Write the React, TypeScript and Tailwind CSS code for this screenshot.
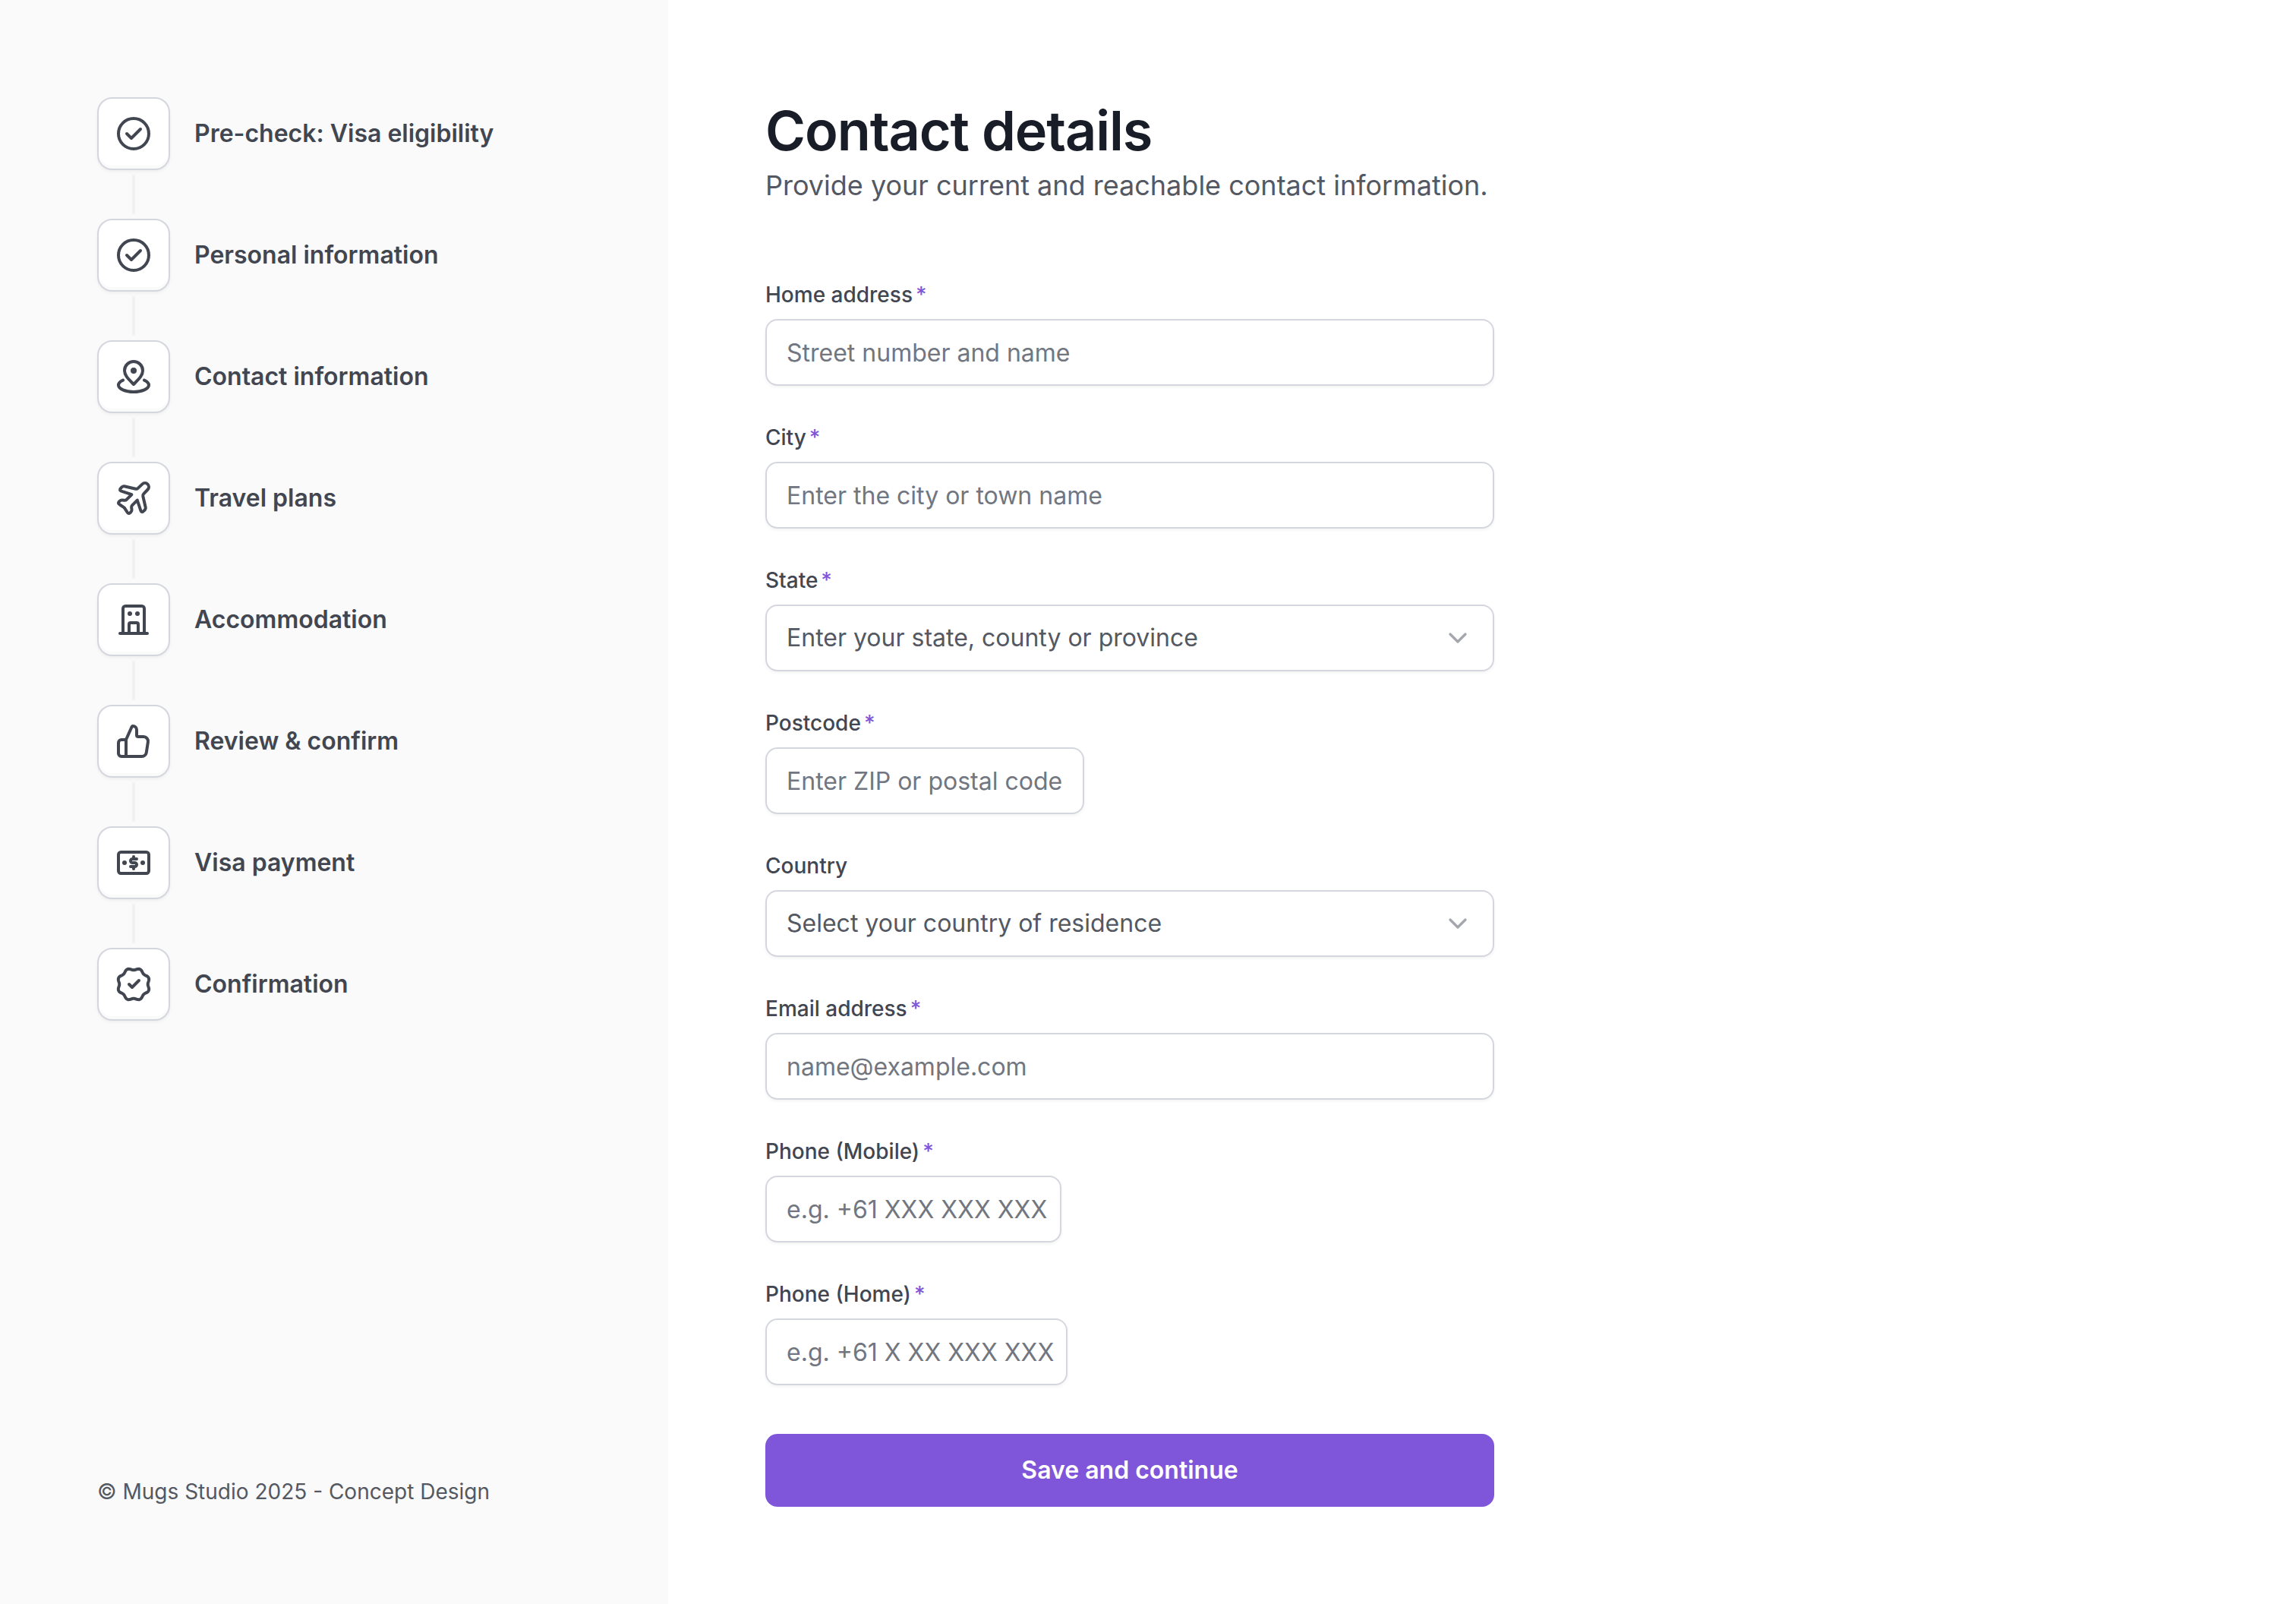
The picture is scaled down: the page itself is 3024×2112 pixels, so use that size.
import React from "react";

// eight-lobed outline of the confirmation badge
const badgePath =
  "M" +
  Array.from({ length: 96 }, (_, i) => {
    const a = (i / 96) * Math.PI * 2;
    const r = 10.05 - 0.7 * Math.cos(8 * a);
    return `${(12 + r * Math.cos(a)).toFixed(2)} ${(12 + r * Math.sin(a)).toFixed(2)}`;
  }).join("L") +
  "Z";

const checkCircle = (
  <>
    <circle cx="12" cy="12" r="10" />
    <path d="M7.5 12l3 3 6-6" />
  </>
);

const steps = [
  { title: "Pre-check: Visa eligibility", icon: checkCircle },
  { title: "Personal information", icon: checkCircle },
  {
    title: "Contact information",
    icon: (
      <>
        <path d="M5 14.286C3.149 15.103 2 16.241 2 17.5C2 19.985 6.477 22 12 22s10-2.015 10-4.5c0-1.259-1.149-2.397-3-3.214" />
        <path d="M12 17c3.5-3.600 6-5.800 6-9A6 6 0 0 0 6 8c0 3.200 2.500 5.400 6 9Z" />
        <circle cx="12" cy="8" r="2" fill="currentColor" stroke="none" />
      </>
    ),
  },
  {
    title: "Travel plans",
    icon: (
      <path d="M21.28 2.78C22.24 3.74 22.26 5.28 21.32 6.25L18.55 9.17C18.12 9.6 17.98 9.95 18.14 10.63L19.87 18.14C20 18.75 19.95 19.1 19.44 19.63L19.07 20C18.46 20.61 18.16 20.92 17.84 20.97C17.57 21.02 17.29 20.95 17.07 20.79C16.81 20.6 16.68 20.19 16.41 19.37L14.39 13.32L11.03 16.68C10.6 17.1 10.5 17.3 10.58 17.99L10.76 19.65C10.83 20.3 10.75 20.53 10.31 20.97L10.11 21.17C9.64 21.64 9.4 21.88 9.14 21.95C8.91 22.01 8.66 21.98 8.45 21.88C8.2 21.76 8.02 21.48 7.64 20.92L6.07 18.57C6 18.45 5.91 18.34 5.79 18.21C5.66 18.09 5.55 18 5.43 17.93L3.08 16.36C2.52 15.98 2.24 15.8 2.12 15.55C2.02 15.34 1.99 15.09 2.05 14.86C2.12 14.6 2.36 14.36 2.83 13.89L3.03 13.69C3.47 13.25 3.7 13.17 4.35 13.24L6.01 13.42C6.7 13.5 6.9 13.4 7.32 12.97L10.68 9.61L4.63 7.59C3.81 7.32 3.4 7.19 3.21 6.93C3.05 6.71 2.98 6.43 3.03 6.16C3.08 5.84 3.39 5.54 4 4.93L4.37 4.56C4.9 4.05 5.25 4 5.86 4.13L13.37 5.86C14.05 6.02 14.4 5.88 14.83 5.45L17.75 2.68C18.72 1.74 20.26 1.76 21.28 2.78Z" />
    ),
  },
  {
    title: "Accommodation",
    icon: (
      <>
        <path d="M3 21h18M5 21V4.600A1.600 1.600 0 0 1 6.600 3h10.800A1.600 1.600 0 0 1 19 4.600V21" />
        <path d="M9 21v-6a1 1 0 0 1 1-1h4a1 1 0 0 1 1 1v6" />
        <circle cx="9.5" cy="8" r="1.5" fill="currentColor" stroke="none" />
        <circle cx="14.5" cy="8" r="1.5" fill="currentColor" stroke="none" />
      </>
    ),
  },
  {
    title: "Review & confirm",
    icon: (
      <path d="M7 22V11M2 13v7a2 2 0 0 0 2 2h13.426a3 3 0 0 0 2.965-2.544l1.077-7A3 3 0 0 0 18.503 9H15a1 1 0 0 1-1-1V4.466A2.466 2.466 0 0 0 11.534 2a.822.822 0 0 0-.751.488L7.264 10.406A1 1 0 0 1 6.350 11H4a2 2 0 0 0-2 2Z" />
    ),
  },
  {
    title: "Visa payment",
    icon: (
      <>
        <rect x="2" y="5" width="20" height="14" rx="1.600" />
        <path d="M14 9.500h-2.750a1.250 1.250 0 0 0 0 2.500h1.500a1.250 1.250 0 0 1 0 2.500H10M12 8v1M12 15v1" />
        <circle cx="6" cy="12" r="1.500" fill="currentColor" stroke="none" />
        <circle cx="18" cy="12" r="1.500" fill="currentColor" stroke="none" />
      </>
    ),
  },
  {
    title: "Confirmation",
    icon: (
      <>
        <path d="M9 12l2 2 4.500-4.500" />
        <path d={badgePath} />
      </>
    ),
  },
];

const fields = [
  { id: "address", label: "Home address", placeholder: "Street number and name", type: "text", required: true, width: "w-full" },
  { id: "city", label: "City", placeholder: "Enter the city or town name", type: "text", required: true, width: "w-full" },
  { id: "state", label: "State", placeholder: "Enter your state, county or province", type: "select", required: true, width: "w-full" },
  { id: "postcode", label: "Postcode", placeholder: "Enter ZIP or postal code", type: "text", required: true, width: "w-[420px]" },
  { id: "country", label: "Country", placeholder: "Select your country of residence", type: "select", required: false, width: "w-full" },
  { id: "email", label: "Email address", placeholder: "name@example.com", type: "email", required: true, width: "w-full" },
  { id: "mobile", label: "Phone (Mobile)", placeholder: "e.g. +61 XXX XXX XXX", type: "tel", required: true, width: "w-[390px]" },
  { id: "home", label: "Phone (Home)", placeholder: "e.g. +61 X XX XXX XXX", type: "tel", required: true, width: "w-[398px]" },
];

const Sidebar = () => {
  return (
    <aside className="flex w-[880px] shrink-0 flex-col justify-between bg-[#fafafa] p-32">
      <ol>
        {steps.map((step, index) => (
          <li key={step.title}>
            <div className="flex items-center gap-8">
              <div className="flex size-24 items-center justify-center rounded-[20px] border-2 border-[#d5d7de] bg-white shadow-[0_2px_4px_rgba(10,13,18,0.05),inset_0_-4px_0_rgba(10,13,18,0.02)]">
                <svg
                  className="size-12 text-[#414651]"
                  viewBox="0 0 24 24"
                  fill="none"
                  stroke="currentColor"
                  strokeWidth="2"
                  strokeLinecap="round"
                  strokeLinejoin="round"
                >
                  {step.icon}
                </svg>
              </div>
              <p className="text-[32px] leading-12 font-semibold text-[#414651]">{step.title}</p>
            </div>
            {index < steps.length - 1 && (
              <div className="my-1.5 ml-[46px] h-13 w-1 rounded-xs bg-[#f0f0f1]" />
            )}
          </li>
        ))}
      </ol>
      <p className="text-[28px] leading-10 text-[#535862]">© Mugs Studio 2025 - Concept Design</p>
    </aside>
  );
};

const Field = ({ field }: { field: any }) => {
  return (
    <div className="flex flex-col gap-3">
      <label htmlFor={field.id} className="flex gap-1 text-[28px] leading-10 font-medium text-[#414651]">
        {field.label}
        {field.required && <span className="text-[#7f56d9]">*</span>}
      </label>
      {field.type === "select" ? (
        <div className="relative">
          <select
            id={field.id}
            className="h-[88px] w-full appearance-none rounded-2xl border-2 border-[#d5d7de] bg-white px-[26px] text-[32px] text-[#535862] shadow-[0_2px_4px_rgba(10,13,18,0.05)]"
          >
            <option>{field.placeholder}</option>
          </select>
          <svg
            className="pointer-events-none absolute top-6 right-7 size-10 text-[#a4a7ae]"
            viewBox="0 0 20 20"
            fill="none"
            stroke="currentColor"
            strokeWidth="1.67"
            strokeLinecap="round"
            strokeLinejoin="round"
          >
            <path d="M5 7.5l5 5 5-5" />
          </svg>
        </div>
      ) : (
        <input
          id={field.id}
          type={field.type}
          placeholder={field.placeholder}
          className={`${field.width} h-[88px] rounded-2xl border-2 border-[#d5d7de] bg-white pr-4 pl-[26px] text-[32px] text-[#181d27] shadow-[0_2px_4px_rgba(10,13,18,0.05)] placeholder:text-[#717680]`}
        />
      )}
    </div>
  );
};

const App = () => {
  return (
    <div className="flex min-h-screen bg-white font-['Inter',sans-serif]">
      <Sidebar />
      <main className="flex-1 p-32">
        <div className="max-w-[960px]">
          <h1 className="text-[72px] leading-[88px] font-semibold tracking-[-0.015em] text-[#181d27]">Contact details</h1>
          <p className="text-[36px] leading-14 text-[#535862]">Provide your current and reachable contact information.</p>
          <form className="mt-24">
            <div className="flex flex-col gap-12">
              {fields.map((field) => (
                <Field key={field.id} field={field} />
              ))}
            </div>
            <button
              type="button"
              className="mt-16 h-24 w-full rounded-2xl bg-[#7f56d9] text-[32px] leading-12 font-semibold text-white"
            >
              Save and continue
            </button>
          </form>
        </div>
      </main>
    </div>
  );
};

export default App;
